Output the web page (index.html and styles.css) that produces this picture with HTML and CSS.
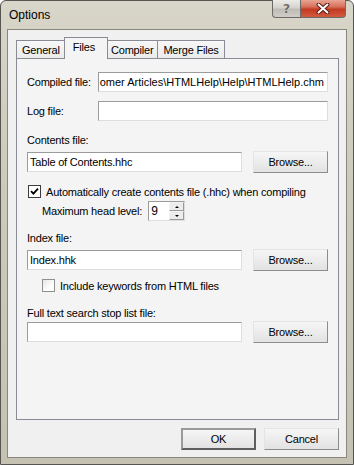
FILE: index.html
```html
<!DOCTYPE html>
<html lang="en">
<head>
    <meta charset="UTF-8">
    <meta name="viewport" content="width=device-width, initial-scale=1.0">
    <title>Options</title>
    <link rel="stylesheet" href="styles.css">
</head>
<body>
    <div class="window">
        <div class="titlebar">
            <span class="title">Options</span>
            <div class="caption-buttons">
                <span class="cap-btn help">?</span>
                <span class="cap-btn close">
                    <svg width="14" height="11" viewBox="0 0 14 11">
                        <path d="M2.5 1.5 L11.5 9.5 M11.5 1.5 L2.5 9.5" stroke="#5a1a10" stroke-width="4" stroke-linecap="round"/>
                        <path d="M2.5 1.5 L11.5 9.5 M11.5 1.5 L2.5 9.5" stroke="#ffffff" stroke-width="2" stroke-linecap="round"/>
                    </svg>
                </span>
            </div>
        </div>

        <div class="client">
            <div class="tabs">
                <span class="tab">General</span>
                <span class="tab active">Files</span>
                <span class="tab">Compiler</span>
                <span class="tab">Merge Files</span>
            </div>

            <div class="panel">
                <div class="row row-first">
                    <span class="label">Compiled file:</span>
                    <div class="field field-short scroll-left">
                        <span>omer Articles\HTMLHelp\Help\HTMLHelp.chm</span>
                    </div>
                </div>
                <div class="row row-log">
                    <span class="label">Log file:</span>
                    <div class="field field-short"></div>
                </div>

                <div class="caption caption-contents">Contents file:</div>
                <div class="row row-browse">
                    <div class="field"><span>Table of Contents.hhc</span></div>
                    <button class="btn">Browse...</button>
                </div>
                <div class="check-row check-auto">
                    <span class="check">
                        <svg width="9" height="9" viewBox="0 0 9 9">
                            <path d="M1 4.2 L3.4 6.6 L8 1.6" fill="none" stroke="#000" stroke-width="1.8"/>
                        </svg>
                    </span>
                    <span>Automatically create contents file (.hhc) when compiling</span>
                </div>
                <div class="row row-level">
                    <span class="label">Maximum head level:</span>
                    <div class="spin">
                        <span class="spin-value">9</span>
                        <span class="spin-arrows">
                            <span class="spin-arrow"><span class="tri up"></span></span>
                            <span class="spin-arrow"><span class="tri down"></span></span>
                        </span>
                    </div>
                </div>

                <div class="caption caption-index">Index file:</div>
                <div class="row row-browse">
                    <div class="field"><span>Index.hhk</span></div>
                    <button class="btn">Browse...</button>
                </div>
                <div class="check-row check-keywords">
                    <span class="check"></span>
                    <span>Include keywords from HTML files</span>
                </div>

                <div class="caption caption-stop">Full text search stop list file:</div>
                <div class="row row-browse row-stop">
                    <div class="field"></div>
                    <button class="btn">Browse...</button>
                </div>
            </div>

            <div class="dialog-buttons">
                <button class="btn btn-default">OK</button>
                <button class="btn">Cancel</button>
            </div>
        </div>
    </div>
</body>
</html>
```

FILE: styles.css
```css
body {
    margin: 0;
    padding: 0;
    background: #ffffff;
    font-family: "Liberation Sans", Arial, sans-serif;
    font-size: 11px;
    letter-spacing: -0.2px;
    color: #000;
}
.window {
    width: 354px;
    height: 465px;
    box-sizing: border-box;
    border: 1px solid #56554f;
    border-radius: 6px 6px 0 0;
    background: linear-gradient(to bottom, #d8d5c9 0%, #cdc9bb 40%, #c6c2b3 100%);
    display: flex;
    flex-direction: column;
}
.titlebar {
    height: 28px;
    display: flex;
    align-items: center;
    padding-left: 8px;
}
.title {
    flex: 1;
    font-size: 12px;
    letter-spacing: 0;
    color: #000;
}
.caption-buttons {
    align-self: flex-start;
    display: flex;
    margin-top: -1px;
    margin-right: 7px;
}
.cap-btn {
    height: 18px;
    box-sizing: border-box;
    display: flex;
    align-items: center;
    justify-content: center;
    border: 1px solid #6b6a66;
    border-top: none;
}
.help {
    width: 28px;
    border-right: none;
    border-radius: 0 0 0 4px;
    background: linear-gradient(to bottom, #ecebe7 0%, #d5d3cc 45%, #bebcb4 55%, #cfcdc6 100%);
    font-family: "DejaVu Sans", sans-serif;
    font-weight: bold;
    font-size: 13px;
    color: #6d6d6d;
    text-shadow: 0 0 1px #ffffff;
}
.close {
    width: 46px;
    border-radius: 0 0 4px 0;
    background: linear-gradient(to bottom, #e8a595 0%, #d8705a 40%, #c23a22 55%, #d35a40 100%);
}
.client {
    flex: 1;
    margin: 0 6px 6px 6px;
    border: 1px solid #8a877c;
    background: #f0f0f0;
    display: flex;
    flex-direction: column;
    padding: 6px 7px 7px 8px;
}
.tabs {
    height: 22px;
    display: flex;
    align-items: flex-end;
    position: relative;
    z-index: 1;
}
.tab {
    height: 18px;
    box-sizing: border-box;
    padding: 0 5px;
    border: 1px solid #898c95;
    border-bottom: none;
    background: linear-gradient(to bottom, #f7f7f7, #ebebeb);
    display: flex;
    align-items: center;
}
.tab + .tab {
    border-left: none;
}
.tab.active {
    height: 22px;
    margin: 0 -2px -1px -2px;
    padding: 0 12px 3px 8px;
    border-left: 1px solid #898c95;
    background: #f4f4f4;
    position: relative;
    z-index: 2;
}
.tab.active + .tab {
    border-left: 1px solid #898c95;
    padding: 0 4px;
}
.panel {
    flex: 1;
    border: 1px solid #898c95;
    background: #f4f4f4;
    padding: 13px 10px 0 10px;
    display: flex;
    flex-direction: column;
}
.row {
    display: flex;
    align-items: center;
}
.row-first {
    height: 20px;
}
.row-log {
    height: 20px;
    margin-top: 9px;
}
.field {
    flex: 1;
    height: 20px;
    box-sizing: border-box;
    border: 1px solid;
    border-color: #9b9b9b #dedede #dedede #9b9b9b;
    background: #ffffff;
    display: flex;
    align-items: center;
    padding: 0 3px 0 2px;
    overflow: hidden;
    white-space: nowrap;
}
.field-short {
    flex: none;
    width: 230px;
    margin-left: auto;
}
.scroll-left {
    justify-content: flex-end;
    padding-left: 1px;
    letter-spacing: 0;
}
.caption {
    line-height: 13px;
}
.caption-contents {
    margin-top: 13px;
}
.caption-index {
    margin-top: 11px;
}
.caption-stop {
    margin-top: 15px;
}
.row-browse {
    height: 22px;
    margin-top: 4px;
}
.row-stop {
    margin-top: 1px;
}
.btn {
    width: 75px;
    height: 22px;
    box-sizing: border-box;
    margin-left: 11px;
    padding: 0;
    font-family: inherit;
    font-size: 11px;
    letter-spacing: -0.2px;
    color: #000;
    border: 1px solid;
    border-color: #e4e4e4 #8c8c8c #8c8c8c #e4e4e4;
    background: linear-gradient(to bottom, #f6f6f6 0%, #ececec 50%, #e2e2e2 100%);
}
.check-row {
    display: flex;
    align-items: center;
    height: 13px;
}
.check-auto {
    margin-top: 12px;
    padding-left: 1px;
}
.check-keywords {
    margin-top: 8px;
    padding-left: 15px;
}
.check {
    width: 13px;
    height: 13px;
    box-sizing: border-box;
    border: 1px solid #8e8f8f;
    background: linear-gradient(135deg, #e6e6e6, #ffffff 70%);
    margin-right: 5px;
    display: flex;
    align-items: center;
    justify-content: center;
}
.check-auto .check {
    border-color: #3c3c3c;
    background: #ffffff;
}
.row-level {
    height: 20px;
    margin-top: 3px;
    padding-left: 15px;
}
.spin {
    margin-left: 6px;
    width: 37px;
    height: 20px;
    box-sizing: border-box;
    border: 1px solid;
    border-color: #9b9b9b #dedede #dedede #9b9b9b;
    background: #ffffff;
    display: flex;
}
.spin-value {
    flex: 1;
    padding-left: 2px;
    display: flex;
    align-items: center;
    font-size: 12px;
}
.spin-arrows {
    width: 15px;
    display: flex;
    flex-direction: column;
}
.spin-arrow {
    flex: 1;
    box-sizing: border-box;
    border: 1px solid;
    border-color: #f4f4f4 #9a9a9a #9a9a9a #f4f4f4;
    background: #ececec;
    display: flex;
    align-items: center;
    justify-content: center;
}
.tri {
    width: 0;
    height: 0;
    border-left: 2px solid transparent;
    border-right: 2px solid transparent;
}
.tri.up {
    border-bottom: 2px solid #000;
}
.tri.down {
    border-top: 2px solid #000;
}
.dialog-buttons {
    display: flex;
    justify-content: flex-end;
    margin-top: 8px;
}
.dialog-buttons .btn {
    margin-left: 8px;
}
.btn-default {
    border: 2px solid #6f6f6f;
    border-color: #9a9a9a #5e5e5e #5e5e5e #9a9a9a;
}
```
